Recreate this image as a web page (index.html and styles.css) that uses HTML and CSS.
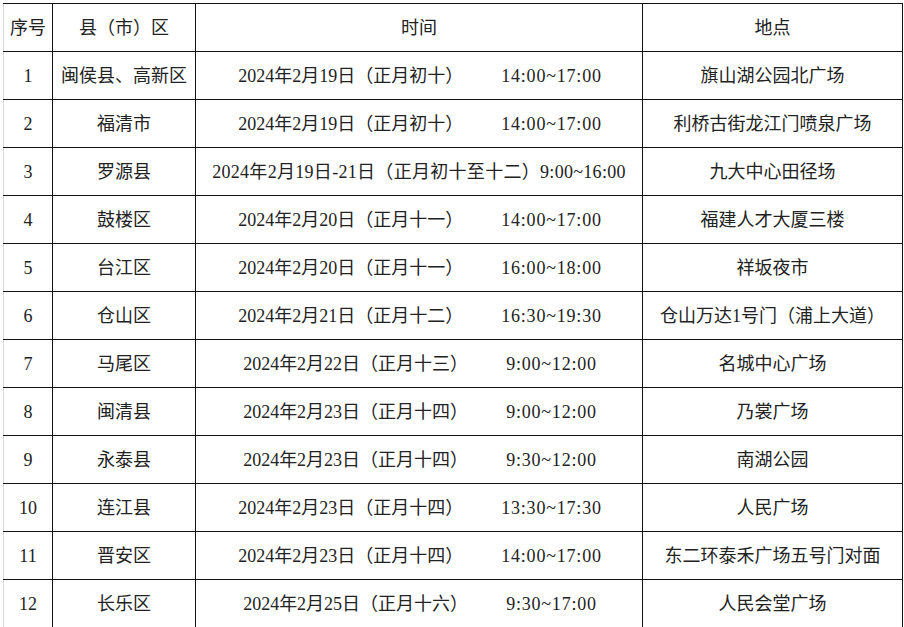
FILE: index.html
```html
<!DOCTYPE html>
<html lang="zh-CN">
<head>
<meta charset="utf-8">
<title>活动安排</title>
<link rel="stylesheet" href="styles.css">
</head>
<body>
<table class="sched">
  <colgroup>
    <col class="c-no">
    <col class="c-area">
    <col class="c-time">
    <col class="c-place">
  </colgroup>
  <tr><td>序号</td><td>县（市）区</td><td>时间</td><td>地点</td></tr>
  <tr><td>1</td><td>闽侯县、高新区</td><td><div class="tm"><span>2024年2月19日（正月初十）</span><span class="hr">14:00~17:00</span></div></td><td>旗山湖公园北广场</td></tr>
  <tr><td>2</td><td>福清市</td><td><div class="tm"><span>2024年2月19日（正月初十）</span><span class="hr">14:00~17:00</span></div></td><td>利桥古街龙江门喷泉广场</td></tr>
  <tr><td>3</td><td>罗源县</td><td><div class="tm one"><span>2024年2月19日-21日（正月初十至十二）9:00~16:00</span></div></td><td>九大中心田径场</td></tr>
  <tr><td>4</td><td>鼓楼区</td><td><div class="tm"><span>2024年2月20日（正月十一）</span><span class="hr">14:00~17:00</span></div></td><td>福建人才大厦三楼</td></tr>
  <tr><td>5</td><td>台江区</td><td><div class="tm"><span>2024年2月20日（正月十一）</span><span class="hr">16:00~18:00</span></div></td><td>祥坂夜市</td></tr>
  <tr><td>6</td><td>仓山区</td><td><div class="tm"><span>2024年2月21日（正月十二）</span><span class="hr">16:30~19:30</span></div></td><td>仓山万达1号门（浦上大道）</td></tr>
  <tr><td>7</td><td>马尾区</td><td><div class="tm"><span>2024年2月22日（正月十三）</span><span class="hr">9:00~12:00</span></div></td><td>名城中心广场</td></tr>
  <tr><td>8</td><td>闽清县</td><td><div class="tm"><span>2024年2月23日（正月十四）</span><span class="hr">9:00~12:00</span></div></td><td>乃裳广场</td></tr>
  <tr><td>9</td><td>永泰县</td><td><div class="tm"><span>2024年2月23日（正月十四）</span><span class="hr">9:30~12:00</span></div></td><td>南湖公园</td></tr>
  <tr><td>10</td><td>连江县</td><td><div class="tm"><span>2024年2月23日（正月十四）</span><span class="hr">13:30~17:30</span></div></td><td>人民广场</td></tr>
  <tr><td>11</td><td>晋安区</td><td><div class="tm"><span>2024年2月23日（正月十四）</span><span class="hr">14:00~17:00</span></div></td><td>东二环泰禾广场五号门对面</td></tr>
  <tr><td>12</td><td>长乐区</td><td><div class="tm"><span>2024年2月25日（正月十六）</span><span class="hr">9:30~17:00</span></div></td><td>人民会堂广场</td></tr>
</table>
</body>
</html>
```
FILE: styles.css
```css
html, body {
  margin: 0;
  padding: 0;
  background: #ffffff;
}
body {
  padding: 3px 0 0 3px;
  font-family: "Liberation Serif", "Noto Sans CJK SC", serif;
  font-size: 18px;
  color: #222222;
  overflow: hidden;
  height: 627px;
  box-sizing: border-box;
}
.sched {
  border-collapse: collapse;
  table-layout: fixed;
  width: 899px;
}
.c-no { width: 49px; }
.c-area { width: 143px; }
.c-time { width: 447px; }
.c-place { width: 260px; }
.sched td {
  border: 1px solid #111111;
  height: 47px;
  padding: 0;
  text-align: center;
  vertical-align: middle;
  line-height: 20px;
  white-space: nowrap;
}
.sched td:first-child {
  border-left-color: #d8d8d8;
}
.tm {
  display: flex;
  justify-content: center;
  gap: 38px;
  padding-left: 2px;
}
.tm .hr {
  letter-spacing: 0.8px;
}
.tm.one {
  gap: 0;
  padding-left: 0;
  letter-spacing: 0.3px;
}
```
